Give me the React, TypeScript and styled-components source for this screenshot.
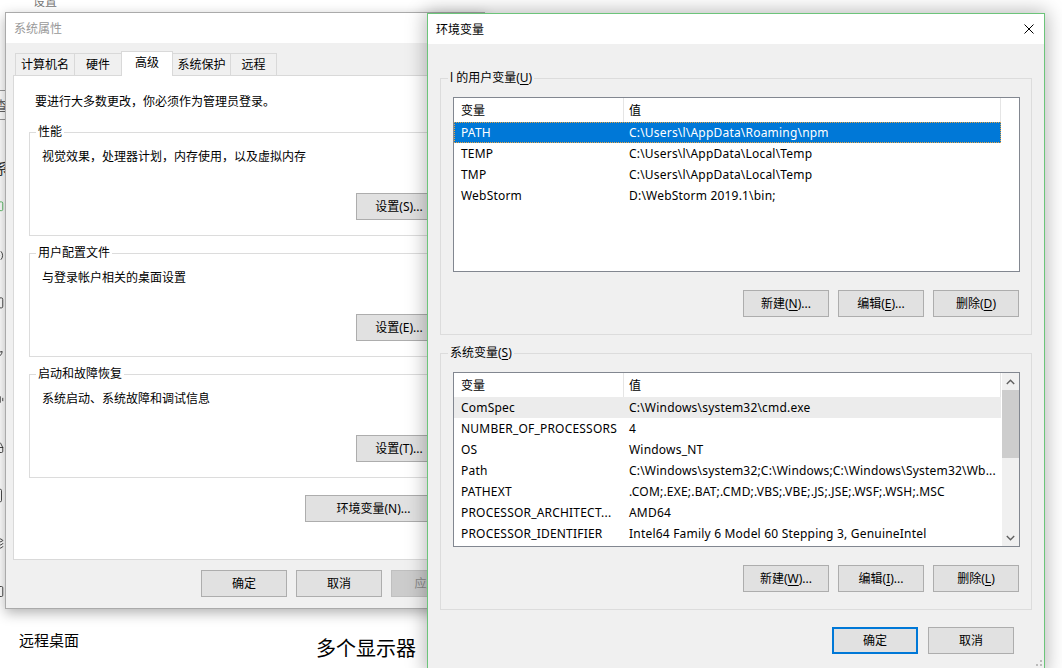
import React from 'react';
import styled, { createGlobalStyle, css } from 'styled-components';
import {
  Monitor,
  Volume2,
  MessageSquare,
  Moon,
  Battery,
  HardDrive,
  Tablet,
  Layers,
  Cast,
  ChevronLeft,
} from 'lucide-react';

const GlobalStyle = createGlobalStyle`
  html, body {
    margin: 0;
    padding: 0;
    background: #fff;
    overflow: hidden;
  }
  body {
    font-family: "Noto Sans", "Noto Sans CJK SC", sans-serif;
    font-size: 12px;
    color: #000;
  }
  * {
    box-sizing: border-box;
  }
`;

const ui = `"Noto Sans", "Noto Sans CJK SC", sans-serif`;

/* ---------- desktop + settings app behind the dialogs ---------- */

const Desktop = styled.div`
  position: relative;
  width: 1062px;
  height: 668px;
  overflow: hidden;
  background: #fff;
`;

const SettingsPage = styled.div`
  display: grid;
  grid-template-columns: 300px 1fr;
  height: 100%;
  font-family: "Noto Sans CJK SC", sans-serif;
`;

const Sidebar = styled.div`
  display: flex;
  flex-direction: column;
`;

const AppTitle = styled.div`
  margin: -7px 0 0 33px;
  line-height: 16px;
  font-size: 12px;
  color: #777;
`;

const SearchBox = styled.div`
  margin: 81px 0 0 -10px;
  width: 290px;
  height: 30px;
  border: 1px solid #999;
  padding-left: 3px;
  line-height: 28px;
  font-size: 14px;
  color: #666;
`;

const SectionLabel = styled.div`
  margin: 38px 0 0 -6px;
  line-height: 20px;
  font-size: 15px;
  color: #333;
`;

const NavList = styled.div`
  margin-top: 5px;
  display: flex;
  flex-direction: column;
`;

const NavItem = styled.div<{ $accent?: boolean }>`
  height: 48px;
  display: flex;
  align-items: center;
  font-size: 15px;
  color: #000;

  svg {
    flex: none;
    margin-left: -11px;
    color: ${(p) => (p.$accent ? '#3cae4a' : '#222')};
  }
`;

const NavLabel = styled.span`
  margin-left: 15px;
`;

const MainArea = styled.div`
  padding: 635px 0 0 16px;
`;

const MainHeading = styled.div`
  font-size: 20px;
  line-height: 26px;
  color: #000;
`;

/* ---------- shared window parts ---------- */

const Window = styled.div<{ $active?: boolean }>`
  position: absolute;
  display: flex;
  flex-direction: column;
  background: #f0f0f0;
  font-family: ${ui};
  font-size: 12px;
  border: 1px solid ${(p) => (p.$active ? '#6cc47a' : '#aaaaaa')};
  box-shadow: ${(p) =>
    p.$active ? '0 0 18px 2px rgba(0, 0, 0, 0.28)' : '0 4px 12px rgba(0, 0, 0, 0.3)'};
`;

const TitleBar = styled.div<{ $active?: boolean }>`
  height: 30px;
  flex: none;
  display: flex;
  align-items: center;
  justify-content: space-between;
  background: #fff;
  padding: 0 10px 0 8px;
  line-height: 27px;
  color: ${(p) => (p.$active ? '#000' : '#999')};
`;

const Button = styled.button<{ $default?: boolean; $disabled?: boolean; $w?: number }>`
  width: ${(p) => p.$w ?? 86}px;
  height: 27px;
  flex: none;
  padding: 0;
  margin: 0;
  font: inherit;
  line-height: 16px;
  color: #000;
  background: #e1e1e1;
  border: 1px solid #adadad;
  ${(p) =>
    p.$default &&
    css`
      border: 2px solid #0078d7;
    `}
  ${(p) =>
    p.$disabled &&
    css`
      background: #cccccc;
      border-color: #bfbfbf;
      color: #8a8a8a;
    `}
`;

const Key = styled.span`
  text-decoration: underline;
  text-underline-offset: 2px;
`;

const Group = styled.div<{ $bg: string; $pad: string }>`
  display: flex;
  flex-direction: column;
  border: 1px solid #dcdcdc;
  padding: ${(p) => p.$pad};
  background: ${(p) => p.$bg};
`;

const GroupTitle = styled.div<{ $bg: string; $shift: number }>`
  align-self: flex-start;
  margin: -9px 0 0 ${(p) => p.$shift}px;
  padding: 0 2px;
  line-height: 16px;
  background: ${(p) => p.$bg};
`;

const ButtonRow = styled.div<{ $top: number; $gap?: number; $right?: number }>`
  display: flex;
  justify-content: flex-end;
  gap: ${(p) => p.$gap ?? 9}px;
  margin-top: ${(p) => p.$top}px;
  padding-right: ${(p) => p.$right ?? 0}px;
`;

/* ---------- system properties dialog ---------- */

const SysWindow = styled(Window)`
  left: 5px;
  top: 12px;
  width: 480px;
  height: 597px;
`;

const SysBody = styled.div`
  display: flex;
  flex-direction: column;
  padding: 8px 7px 0;
`;

const TabStrip = styled.div`
  display: flex;
  align-items: flex-end;
  height: 25px;
  padding-left: 2px;
`;

const Tab = styled.div<{ $w: number; $selected?: boolean }>`
  width: ${(p) => p.$w}px;
  height: ${(p) => (p.$selected ? 25 : 23)}px;
  margin-left: -1px;
  border: 1px solid #d9d9d9;
  border-bottom: none;
  background: ${(p) => (p.$selected ? '#fff' : '#f0f0f0')};
  display: flex;
  align-items: center;
  justify-content: center;
  line-height: 16px;
  padding-bottom: ${(p) => (p.$selected ? 3 : 0)}px;
  ${(p) =>
    p.$selected &&
    css`
      position: relative;
      z-index: 1;
    `}

  &:first-child {
    margin-left: 0;
  }
`;

const TabPanel = styled.div`
  margin-top: -1px;
  height: 485px;
  background: #fff;
  border: 1px solid #d9d9d9;
  padding: 18px 15px 0;
  display: flex;
  flex-direction: column;
`;

const Intro = styled.div`
  margin-left: 6px;
  line-height: 16px;
`;

const SysGroupStack = styled.div`
  display: flex;
  flex-direction: column;
  gap: 17px;
  margin-top: 22px;
`;

const GroupText = styled.div`
  margin-top: 9px;
  line-height: 16px;
`;

const SysFooter = styled.div`
  display: flex;
  justify-content: flex-end;
  gap: 9px;
  margin-top: 10px;
`;

/* ---------- environment variables dialog ---------- */

const EnvWindow = styled(Window)`
  left: 427px;
  top: 13px;
  width: 618px;
  height: 660px;
`;

const EnvBody = styled.div`
  display: flex;
  flex-direction: column;
  padding: 34px 12px 0 12px;
`;

const ListBox = styled.div`
  margin-top: 11px;
  height: 175px;
  border: 1px solid #828790;
  background: #fff;
  display: flex;
  overflow: hidden;
`;

const ListTable = styled.div`
  width: 548px;
  display: flex;
  flex-direction: column;
`;

const HeaderRow = styled.div`
  display: flex;
  height: 24px;
  flex: none;
`;

const HeaderCell = styled.div<{ $w: number; $pad: number }>`
  width: ${(p) => p.$w}px;
  flex: none;
  padding-left: ${(p) => p.$pad}px;
  border-right: 1px solid #e5e5e5;
  line-height: 25px;
`;

const Row = styled.div<{ $state?: 'selected' | 'hover' }>`
  display: flex;
  height: 21px;
  flex: none;
  width: 547px;
  line-height: 22px;
  white-space: nowrap;
  letter-spacing: 0.2px;
  ${(p) =>
    p.$state === 'selected' &&
    css`
      background: #0078d7;
      color: #fff;
      outline: 1px dotted #e8a544;
      outline-offset: -1px;
    `}
  ${(p) =>
    p.$state === 'hover' &&
    css`
      background: #ececec;
    `}
`;

const Cell = styled.div<{ $w: number; $pad: number }>`
  width: ${(p) => p.$w}px;
  flex: none;
  padding-left: ${(p) => p.$pad}px;
  overflow: hidden;
`;

const Gutter = styled.div`
  width: 17px;
  flex: none;
  display: flex;
  flex-direction: column;
`;

const ScrollTrack = styled(Gutter)`
  background: #f0f0f0;
`;

const ScrollArrow = styled.div`
  height: 17px;
  flex: none;
  display: flex;
  align-items: center;
  justify-content: center;
`;

const ScrollThumb = styled.div`
  height: 68px;
  background: #cdcdcd;
`;

const ScrollSpacer = styled.div`
  flex: 1;
`;

const Grip = styled.svg`
  position: absolute;
  right: 2px;
  bottom: 2px;
`;

type Pair = [string, string];

const userVars: Pair[] = [
  ['PATH', 'C:\\Users\\l\\AppData\\Roaming\\npm'],
  ['TEMP', 'C:\\Users\\l\\AppData\\Local\\Temp'],
  ['TMP', 'C:\\Users\\l\\AppData\\Local\\Temp'],
  ['WebStorm', 'D:\\WebStorm 2019.1\\bin;'],
];

const sysVars: Pair[] = [
  ['ComSpec', 'C:\\Windows\\system32\\cmd.exe'],
  ['NUMBER_OF_PROCESSORS', '4'],
  ['OS', 'Windows_NT'],
  ['Path', 'C:\\Windows\\system32;C:\\Windows;C:\\Windows\\System32\\Wb...'],
  ['PATHEXT', '.COM;.EXE;.BAT;.CMD;.VBS;.VBE;.JS;.JSE;.WSF;.WSH;.MSC'],
  ['PROCESSOR_ARCHITECT...', 'AMD64'],
  ['PROCESSOR_IDENTIFIER', 'Intel64 Family 6 Model 60 Stepping 3, GenuineIntel'],
  ['PROCESSOR_LEVEL', '6'],
];

const Chevron = ({ up }: { up?: boolean }) => (
  <svg width="9" height="6" viewBox="0 0 9 6">
    <polyline
      points={up ? '0.8,5 4.5,1.3 8.2,5' : '0.8,1 4.5,4.7 8.2,1'}
      fill="none"
      stroke="#606060"
      strokeWidth="1.4"
    />
  </svg>
);

function VarList({
  rows,
  selected,
  hover,
  scroll,
}: {
  rows: Pair[];
  selected?: number;
  hover?: number;
  scroll?: boolean;
}) {
  return (
    <ListBox>
      <ListTable>
        <HeaderRow>
          <HeaderCell $w={170} $pad={7}>变量</HeaderCell>
          <HeaderCell $w={377} $pad={5}>值</HeaderCell>
        </HeaderRow>
        {rows.map(([name, value], i) => (
          <Row
            key={name}
            $state={i === selected ? 'selected' : i === hover ? 'hover' : undefined}
          >
            <Cell $w={170} $pad={7}>{name}</Cell>
            <Cell $w={377} $pad={5}>{value}</Cell>
          </Row>
        ))}
      </ListTable>
      {scroll ? (
        <ScrollTrack>
          <ScrollArrow>
            <Chevron up />
          </ScrollArrow>
          <ScrollThumb />
          <ScrollSpacer />
          <ScrollArrow>
            <Chevron />
          </ScrollArrow>
        </ScrollTrack>
      ) : (
        <Gutter />
      )}
    </ListBox>
  );
}

const navItems = [
  { icon: Monitor, label: '显示' },
  { icon: Volume2, label: '声音' },
  { icon: MessageSquare, label: '通知和操作' },
  { icon: Moon, label: '专注助手' },
  { icon: Battery, label: '电源和睡眠' },
  { icon: HardDrive, label: '存储' },
  { icon: Tablet, label: '平板电脑模式' },
  { icon: Layers, label: '多任务处理' },
  { icon: Cast, label: '投影到此电脑' },
  { icon: ChevronLeft, label: '远程桌面' },
];

const sysGroups = [
  { title: '性能', text: '视觉效果，处理器计划，内存使用，以及虚拟内存', btn: '设置(S)...' },
  { title: '用户配置文件', text: '与登录帐户相关的桌面设置', btn: '设置(E)...' },
  { title: '启动和故障恢复', text: '系统启动、系统故障和调试信息', btn: '设置(T)...' },
];

const tabs = [
  { label: '计算机名', w: 60 },
  { label: '硬件', w: 48 },
  { label: '高级', w: 52, selected: true },
  { label: '系统保护', w: 59 },
  { label: '远程', w: 47 },
];

export default function App() {
  return (
    <Desktop>
      <GlobalStyle />

      <SettingsPage>
        <Sidebar>
          <AppTitle>设置</AppTitle>
          <SearchBox>查找设置</SearchBox>
          <SectionLabel>系统</SectionLabel>
          <NavList>
            {navItems.map(({ icon: Icon, label }, i) => (
              <NavItem key={label} $accent={i === 0}>
                <Icon size={15} strokeWidth={1.3} />
                <NavLabel>{label}</NavLabel>
              </NavItem>
            ))}
          </NavList>
        </Sidebar>
        <MainArea>
          <MainHeading>多个显示器</MainHeading>
        </MainArea>
      </SettingsPage>

      <SysWindow>
        <TitleBar>系统属性</TitleBar>
        <SysBody>
          <TabStrip>
            {tabs.map((t) => (
              <Tab key={t.label} $w={t.w} $selected={t.selected}>
                {t.label}
              </Tab>
            ))}
          </TabStrip>
          <TabPanel>
            <Intro>要进行大多数更改，你必须作为管理员登录。</Intro>
            <SysGroupStack>
              {sysGroups.map((g) => (
                <Group key={g.title} $bg="#fff" $pad="0 18px 15px 12px">
                  <GroupTitle $bg="#fff" $shift={-6}>{g.title}</GroupTitle>
                  <GroupText>{g.text}</GroupText>
                  <ButtonRow $top={28}>
                    <Button>{g.btn}</Button>
                  </ButtonRow>
                </Group>
              ))}
            </SysGroupStack>
            <ButtonRow $top={17} $right={19}>
              <Button $w={137}>环境变量(N)...</Button>
            </ButtonRow>
          </TabPanel>
          <SysFooter>
            <Button>确定</Button>
            <Button>取消</Button>
            <Button $disabled>应用(A)</Button>
          </SysFooter>
        </SysBody>
      </SysWindow>

      <EnvWindow $active>
        <TitleBar $active>
          环境变量
          <svg width="10" height="10" viewBox="0 0 10 10">
            <path d="M0.5 0.5 L9.5 9.5 M9.5 0.5 L0.5 9.5" stroke="#000" strokeWidth="1" />
          </svg>
        </TitleBar>
        <EnvBody>
          <Group $bg="#f0f0f0" $pad="0 11px 17px 12px">
            <GroupTitle $bg="#f0f0f0" $shift={-5}>
              l 的用户变量(<Key>U</Key>)
            </GroupTitle>
            <VarList rows={userVars} selected={0} />
            <ButtonRow $top={18} $right={1}>
              <Button>新建(<Key>N</Key>)...</Button>
              <Button>编辑(<Key>E</Key>)...</Button>
              <Button>删除(<Key>D</Key>)</Button>
            </ButtonRow>
          </Group>

          <Group $bg="#f0f0f0" $pad="0 11px 17px 12px" style={{ marginTop: 18 }}>
            <GroupTitle $bg="#f0f0f0" $shift={-5}>
              系统变量(<Key>S</Key>)
            </GroupTitle>
            <VarList rows={sysVars} hover={0} scroll />
            <ButtonRow $top={18} $right={1}>
              <Button>新建(<Key>W</Key>)...</Button>
              <Button>编辑(<Key>I</Key>)...</Button>
              <Button>删除(<Key>L</Key>)</Button>
            </ButtonRow>
          </Group>

          <ButtonRow $top={17} $gap={10} $right={18}>
            <Button $default>确定</Button>
            <Button>取消</Button>
          </ButtonRow>
        </EnvBody>
        <Grip width="10" height="10" viewBox="0 0 10 10">
          <rect x="8" y="0" width="2" height="2" fill="#bbb" />
          <rect x="4" y="4" width="2" height="2" fill="#bbb" />
          <rect x="8" y="4" width="2" height="2" fill="#bbb" />
          <rect x="0" y="8" width="2" height="2" fill="#bbb" />
          <rect x="4" y="8" width="2" height="2" fill="#bbb" />
          <rect x="8" y="8" width="2" height="2" fill="#bbb" />
        </Grip>
      </EnvWindow>
    </Desktop>
  );
}
